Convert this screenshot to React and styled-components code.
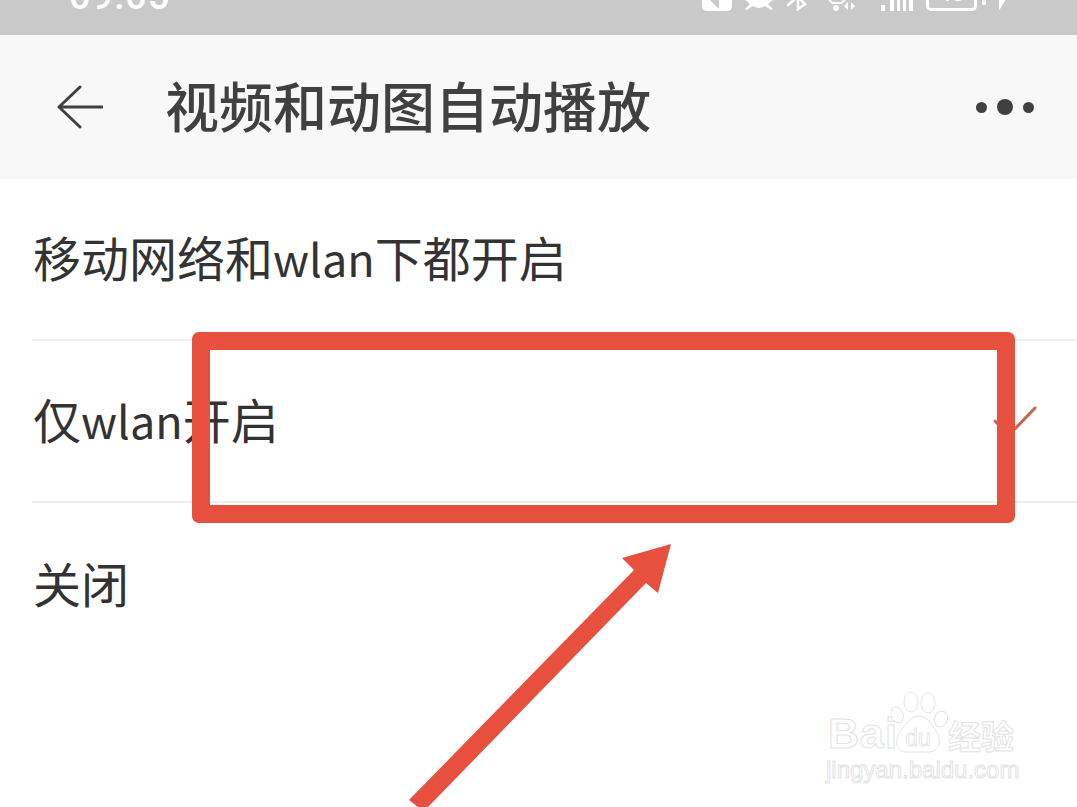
import React from "react";
import styled, { createGlobalStyle } from "styled-components";

const Global = createGlobalStyle`
  html, body { margin: 0; padding: 0; background: #fff; }
  body { font-family: "Noto Sans CJK SC", "Noto Sans", sans-serif; }
`;

const Screen = styled.div`
  position: relative;
  width: 1077px;
  height: 807px;
  overflow: hidden;
  background: #fff;
`;

const StatusBar = styled.div`
  height: 35px;
  background: #c9c9c9;
  display: flex;
  align-items: flex-end;
  justify-content: space-between;
  overflow: hidden;
  box-sizing: border-box;
  padding: 0 71px 24px 69px;
  color: #fff;
`;

const Time = styled.span`
  font-family: "Roboto", "Liberation Sans", sans-serif;
  font-size: 38px;
  font-weight: 500;
  line-height: 38px;
  letter-spacing: 1px;
  margin-bottom: -4px;
  flex: none;
`;

const StatusIcons = styled.div`
  display: flex;
  align-items: flex-end;
  flex: none;
`;

const StatusIcon = styled.svg`
  display: block;
  flex: none;
  margin-left: ${(p) => p.$gap}px;
`;

const Battery = styled.div`
  flex: none;
  box-sizing: border-box;
  width: 51px;
  height: 30px;
  margin-left: 13px;
  border: 3px solid #fff;
  border-radius: 5px;
  font-family: "Roboto", sans-serif;
  font-size: 23px;
  font-weight: 500;
  line-height: 20px;
  text-align: center;
`;

const Header = styled.header`
  height: 144px;
  background: #f8f8f8;
  display: flex;
  align-items: center;
  box-sizing: border-box;
  padding: 0 43px 0 57px;
`;

const BackIcon = styled.svg`
  display: block;
  flex: none;
`;

const Title = styled.h1`
  flex: 1;
  margin: -4px 0 0 62px;
  font-size: 54px;
  line-height: 64px;
  font-weight: 500;
  color: #404040;
  white-space: nowrap;
`;

const MoreDots = styled.div`
  display: flex;
  align-items: center;
  gap: 10px;
  flex: none;
`;

const Dot = styled.span`
  display: block;
  width: ${(p) => p.$size}px;
  height: ${(p) => p.$size}px;
  border-radius: 50%;
  background: #404040;
`;

const List = styled.ul`
  list-style: none;
  margin: 0;
  padding: 0 0 0 32px;
`;

const Row = styled.li`
  height: 162px;
  box-sizing: border-box;
  display: flex;
  align-items: center;
  justify-content: space-between;
  padding: 0 40px 0 1px;
  border-bottom: ${(p) => (p.$last ? "none" : "2px solid #eeeeee")};
  color: #333333;
  white-space: nowrap;
`;

const RowLabel = styled.span`
  display: block;
  font-size: 48px;
  line-height: 60px;
  margin-top: -4px;
`;

const Latin = styled.span`
  font-size: 45px;
`;

const CheckIcon = styled.svg`
  display: block;
  flex: none;
`;

const Highlight = styled.div`
  position: absolute;
  left: 192px;
  top: 332px;
  width: 823px;
  height: 191px;
  box-sizing: border-box;
  border: 18px solid #e74f3e;
  border-radius: 7px;
`;

const Arrow = styled.svg`
  position: absolute;
  left: 400px;
  top: 540px;
`;

const Watermark = styled.div`
  position: absolute;
  left: 826px;
  top: 690px;
  width: 200px;
  display: flex;
  flex-direction: column;
  color: #fff;
  -webkit-text-stroke: 1px #e3e3e3;
`;

const LogoLine = styled.div`
  display: flex;
  align-items: flex-end;
  height: 64px;
  white-space: nowrap;
`;

const LogoLatin = styled.span`
  flex: none;
  font-family: "Liberation Sans", sans-serif;
  font-weight: 700;
  font-size: 43px;
  line-height: 43px;
  letter-spacing: 1px;
  margin-left: 2px;
  margin-bottom: -1px;
`;

const Paw = styled.svg`
  display: block;
  flex: none;
  margin-left: -7px;
`;

const LogoCjk = styled.span`
  flex: none;
  font-size: 33px;
  line-height: 38px;
  font-weight: 700;
  margin-left: -1px;
`;

const Domain = styled.div`
  font-family: "Liberation Sans", sans-serif;
  font-size: 24px;
  line-height: 26px;
  margin-top: 3px;
  white-space: nowrap;
`;

export default function App() {
  return (
    <Screen>
      <Global />
      <StatusBar>
        <Time>09:05</Time>
        <StatusIcons>
          <StatusIcon $gap={0} width="30" height="11" viewBox="0 0 30 11" fill="#fff">
            <path fillRule="evenodd" d="M0 0h30v6q0 5-5 5H5q-5 0-5-5zM8 0l9 9V0z" />
          </StatusIcon>
          <StatusIcon $gap={13} width="28" height="11" viewBox="0 0 28 11" fill="#fff">
            <path d="M0 0h28l-5 4 5 5-2 1-6-4q-6 4-12 0l-6 4-2-1 5-5z" />
          </StatusIcon>
          <StatusIcon $gap={14} width="20" height="12" viewBox="0 0 20 12" fill="none" stroke="#fff" strokeWidth="2.6" strokeLinecap="round">
            <path d="M1 6l6-5M11 0v10l7-5-5-5" />
          </StatusIcon>
          <StatusIcon $gap={21} width="28" height="11" viewBox="0 0 28 11" fill="#fff">
            <path d="M0 0h3l2 2 8 0 2-2h3l-4 4H4z" opacity=".85" />
            <circle cx="8" cy="8" r="3" />
            <path d="M20 2v8l-4-4zM23 2v8l4-4z" />
          </StatusIcon>
          <StatusIcon $gap={25} width="32" height="11" viewBox="0 0 32 11" fill="#fff">
            <path d="M0 5h4v6H0zM9 0h4v11H9zM16 0h3v11h-3zM22 0h3v11h-3zM28 0h4v11h-4z" />
          </StatusIcon>
          <Battery>48</Battery>
          <StatusIcon $gap={5} width="24" height="12" viewBox="0 0 24 12" fill="#fff">
            <rect x="0" y="0" width="4" height="6" rx="1" />
            <path d="M17 0h7l-6 10-1 1z" />
          </StatusIcon>
        </StatusIcons>
      </StatusBar>

      <Header>
        <BackIcon width="46" height="44" viewBox="0 0 46 44" fill="none" stroke="#404040" strokeWidth="3" strokeLinecap="round" strokeLinejoin="round">
          <path d="M23 2L2 22l21 20M2 22h43" />
        </BackIcon>
        <Title>视频和动图自动播放</Title>
        <MoreDots>
          <Dot $size={11} />
          <Dot $size={16} />
          <Dot $size={11} />
        </MoreDots>
      </Header>

      <List>
        <Row>
          <RowLabel>移动网络和<Latin>wlan</Latin>下都开启</RowLabel>
        </Row>
        <Row>
          <RowLabel>仅<Latin>wlan</Latin>开启</RowLabel>
          <CheckIcon width="44" height="30" viewBox="0 0 44 30" fill="none" stroke="#c9654f" strokeWidth="3" strokeLinecap="round">
            <path d="M2 15l14 14L42 2" />
          </CheckIcon>
        </Row>
        <Row $last>
          <RowLabel>关闭</RowLabel>
        </Row>
      </List>

      <Highlight />
      <Arrow width="280" height="267" viewBox="0 0 280 267" fill="#e74f3e">
        <path d="M271 4L222 18l12 12L9 260l9 7h10L246 43l12 10z" />
      </Arrow>

      <Watermark>
        <LogoLine>
          <LogoLatin>Bai</LogoLatin>
          <Paw width="58" height="64" viewBox="0 0 58 64" fill="#fff" stroke="#e3e3e3" strokeWidth="1">
            <ellipse cx="6" cy="25" rx="6" ry="8" transform="rotate(-20 6 25)" />
            <ellipse cx="20" cy="12" rx="7" ry="10" />
            <ellipse cx="37" cy="13" rx="7" ry="10" />
            <ellipse cx="50" cy="29" rx="6.5" ry="8" transform="rotate(20 50 29)" />
            <path d="M28 26c8 0 12 8 17 15 6 9 4 21-8 21H16C5 62 3 50 9 42c5-6 10-16 19-16z" />
            <text x="27" y="56" textAnchor="middle" fontFamily="Liberation Sans" fontSize="23" strokeWidth="0.8">du</text>
          </Paw>
          <LogoCjk>经验</LogoCjk>
        </LogoLine>
        <Domain>jingyan.baidu.com</Domain>
      </Watermark>
    </Screen>
  );
}
